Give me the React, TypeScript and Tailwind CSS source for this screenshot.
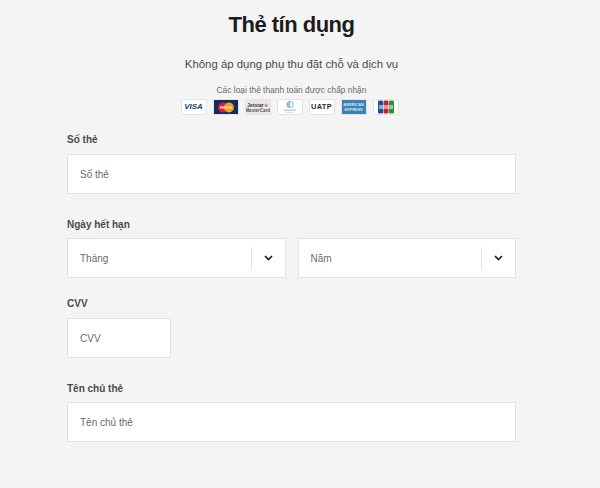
import { ReactNode } from 'react';

function CardLogo({ children, className = '' }: { children: ReactNode; className?: string }) {
  return (
    <div className={`flex h-4 w-[26px] items-center justify-center overflow-hidden border border-[#e4e4e4] ${className}`}>
      {children}
    </div>
  );
}

function Field({ label, placeholder, className = '', inputClass = 'w-full', labelClass = 'mb-2' }: { label: string; placeholder: string; className?: string; inputClass?: string; labelClass?: string }) {
  return (
    <div className={className}>
      <div className={`h-[13px] text-[10px] leading-[13px] font-bold text-[#4a4a4a] ${labelClass}`}>{label}</div>
      <div className={`flex h-10 items-center border border-[#e2e2e2] bg-white pl-3 text-[10px] text-[#6b6b6b] ${inputClass}`}>
        {placeholder}
      </div>
    </div>
  );
}

function SelectBox({ placeholder }: { placeholder: string }) {
  return (
    <div className="flex h-10 flex-1 items-center border border-[#e2e2e2] bg-white pl-3 text-[10px] text-[#6b6b6b]">
      <span className="flex-1">{placeholder}</span>
      <div className="h-[23px] w-px bg-[#e6e6e6]" />
      <div className="flex w-[33px] items-center justify-center">
        <svg width="9" height="6" viewBox="0 0 9 6" fill="none" stroke="#1c1c1c" strokeWidth="1.7">
          <path d="M1 1l3.5 3.5L8 1" />
        </svg>
      </div>
    </div>
  );
}

export default function App() {
  return (
    <div className="h-[488px] w-[600px] overflow-hidden bg-[#f4f4f4] font-['Liberation_Sans',Arial,sans-serif]">
      <div className="ml-[67px] w-[449px]">
        <div className="pt-[11px] text-center text-[22px] leading-[28px] font-bold tracking-[-0.5px] text-[#1b1b1b]">Thẻ tín dụng</div>
        <div className="mt-[18px] text-center text-[11.4px] leading-[14px] text-[#4a4a4a]">Không áp dụng phụ thu đặt chỗ và dịch vụ</div>
        <div className="mt-[14px] text-center text-[8.4px] leading-[11px] text-[#6a6a6a]">Các loại thẻ thanh toán được chấp nhận</div>

        <div className="mt-[3px] flex justify-center gap-[6px] pr-1">
          <CardLogo className="bg-white">
            <span className="text-[8px] font-bold italic text-[#1a3a7c]">VISA</span>
          </CardLogo>
          <CardLogo className="bg-[#0d2f63]">
            <svg width="18" height="11" viewBox="0 0 18 11">
              <circle cx="6" cy="5.5" r="5" fill="#e2212c" />
              <circle cx="12" cy="5.5" r="5" fill="#f59e1e" />
              <rect x="3" y="4.4" width="12" height="2.2" fill="#f4c9b0" />
            </svg>
          </CardLogo>
          <CardLogo className="flex-col bg-[#e9e9e9]">
            <span className="text-[5px] leading-[6px] font-bold text-[#333]">
              Jetstar<span className="text-[#e8741e]">★</span>
            </span>
            <span className="text-[4.5px] leading-[5px] font-bold text-[#555]">MasterCard</span>
          </CardLogo>
          <CardLogo className="bg-white">
            <svg width="18" height="14" viewBox="0 0 18 14">
              <circle cx="9" cy="4.5" r="3.6" fill="#8dbbdc" />
              <path d="M9 2a2.5 2.5 0 0 1 0 5z" fill="#fff" />
              <rect x="3" y="9.5" width="12" height="1.2" fill="#a9c8e0" />
              <rect x="5" y="11.7" width="8" height="1" fill="#c5dbeb" />
            </svg>
          </CardLogo>
          <CardLogo className="bg-white">
            <span className="text-[7.5px] font-bold tracking-[0.3px] text-[#2b2b2b]">UATP</span>
          </CardLogo>
          <CardLogo className="flex-col bg-[#3a82b5]">
            <span className="text-[3.8px] leading-[5px] font-bold text-[#d6e8f4]">AMERICAN</span>
            <span className="text-[3.8px] leading-[4px] font-bold text-[#d6e8f4]">EXPRESS</span>
          </CardLogo>
          <CardLogo className="bg-white">
            <svg width="18" height="14" viewBox="0 0 18 14">
              <rect x="1" y="0.5" width="5" height="13" rx="1.2" fill="#1f4f9c" />
              <rect x="6.5" y="0.5" width="5" height="13" rx="1.2" fill="#c8202f" />
              <rect x="12" y="0.5" width="5" height="13" rx="1.2" fill="#2a8f3f" />
              <rect x="2" y="5" width="14" height="4" fill="#ffffff" opacity="0.5" />
            </svg>
          </CardLogo>
        </div>

        <div className="mt-[18px]">
          <Field label="Số thẻ" placeholder="Số thẻ" />

          <div className="mt-[24px]">
            <div className="mb-[7px] h-[13px] text-[10px] leading-[13px] font-bold text-[#4a4a4a]">Ngày hết hạn</div>
            <div className="flex gap-3">
              <SelectBox placeholder="Tháng" />
              <SelectBox placeholder="Năm" />
            </div>
          </div>

          <Field label="CVV" placeholder="CVV" className="mt-[19px]" inputClass="w-[104px]" />
          <Field label="Tên chủ thẻ" placeholder="Tên chủ thẻ" className="mt-[24px]" labelClass="mb-[7px]" />
        </div>
      </div>
    </div>
  );
}
